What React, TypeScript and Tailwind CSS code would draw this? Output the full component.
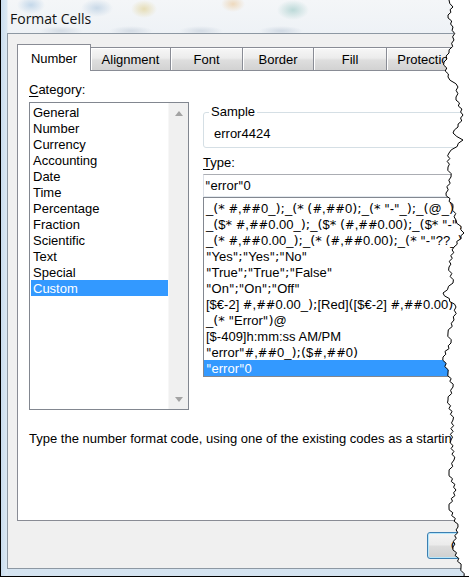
import React from "react";

const tearPts: [number, number][] = [
  [448, 0], [452, 7], [447, 15], [452, 27], [453, 40], [448, 53], [443, 62], [447, 77],
  [457, 87], [455, 97], [462, 115], [457, 127], [452, 133], [462, 140], [448, 153],
  [447, 167], [450, 177], [445, 193], [452, 207], [455, 220], [463, 233], [453, 247],
  [448, 267], [452, 283], [442, 293], [455, 307], [453, 320], [447, 333], [450, 343],
  [442, 357], [447, 373], [452, 387], [447, 400], [452, 420], [450, 440], [453, 460],
  [448, 473], [455, 490], [448, 507], [457, 527], [452, 547], [460, 567], [463, 577],
];

function jag(pts: [number, number][]): [number, number][] {
  const out: [number, number][] = [];
  for (let i = 0; i < pts.length - 1; i++) {
    const [x1, y1] = pts[i];
    const [x2, y2] = pts[i + 1];
    out.push([x1, y1]);
    const steps = Math.max(1, Math.round((y2 - y1) / 3));
    for (let s = 1; s < steps; s++) {
      const t = s / steps;
      const dx = (s % 2 === 0 ? 1 : -1) * 1.2;
      out.push([x1 + (x2 - x1) * t + dx, y1 + (y2 - y1) * t]);
    }
  }
  out.push(pts[pts.length - 1]);
  return out;
}

const categories = [
  "General", "Number", "Currency", "Accounting", "Date", "Time", "Percentage",
  "Fraction", "Scientific", "Text", "Special", "Custom",
];

const types = [
  '_(* #,##0_);_(* (#,##0);_(* "-"_);_(@_)',
  '_($* #,##0.00_);_($* (#,##0.00);_($* "-"??_);_(@_)',
  '_(* #,##0.00_);_(* (#,##0.00);_(* "-"??_);_(@_)',
  '"Yes";"Yes";"No"',
  '"True";"True";"False"',
  '"On";"On";"Off"',
  "[$€-2] #,##0.00_);[Red]([$€-2] #,##0.00)",
  '_(* "Error")@',
  "[$-409]h:mm:ss AM/PM",
  '"error"#,##0_);($#,##0)',
  '"error"0',
];

// Use wider punctuation glyphs to approximate the original dialog font's metrics
function Fmt({ s }: { s: string }) {
  const parts: React.ReactNode[] = [];
  let buf = "";
  const flush = (k: number) => {
    if (buf) {
      parts.push(<span key={"p" + k}>{buf}</span>);
      buf = "";
    }
  };
  s.split("").forEach((ch, i) => {
    let cls = "";
    if (ch === "#") cls = "font-['DejaVu_Sans',sans-serif] text-[11.5px]";
    else if (ch === "*") cls = "font-['DejaVu_Sans',sans-serif] text-[13px]";
    else if (ch === ";") cls = "font-['DejaVu_Sans',sans-serif] text-[13px]";
    else if (ch === "(" || ch === ")") cls = "font-['DejaVu_Sans',sans-serif] text-[13px]";
    else if (ch === '"') cls = "font-['DejaVu_Sans',sans-serif] text-[12px]";
    if (cls) {
      flush(i);
      parts.push(
        <span key={"c" + i} className={cls}>
          {ch}
        </span>
      );
    } else {
      buf += ch;
    }
  });
  flush(s.length + 1);
  return <>{parts}</>;
}

function Tab({ label, w }: { label: string; w: string }) {
  return (
    <div
      className={`${w} h-[23px] border-t border-r border-[#898c95] bg-[linear-gradient(to_bottom,#f7f7f7_0%,#ececec_45%,#dedede_55%,#d2d2d2_100%)] shadow-[inset_1px_1px_0_#ffffff] flex items-center justify-center pt-[2px] whitespace-nowrap overflow-hidden`}
    >
      {label}
    </div>
  );
}

export default function App() {
  const jp = jag(tearPts);
  const line = jp.map(([x, y]) => `${x.toFixed(1)},${y.toFixed(1)}`).join(" ");
  const poly = line + " 469,577 469,0";
  return (
    <div className="relative w-[469px] h-[577px] overflow-hidden border-l border-b border-black font-['Liberation_Sans',Arial,sans-serif] text-[13px] text-black bg-[radial-gradient(14px_9px_at_30px_5px,#c4d8ea,transparent),radial-gradient(16px_9px_at_96px_8px,#c9d9e8,transparent),radial-gradient(13px_9px_at_143px_9px,#e6ddb6,transparent),radial-gradient(12px_8px_at_232px_4px,#eed9bd,transparent),radial-gradient(16px_10px_at_292px_10px,#bcd9d8,transparent),radial-gradient(22px_5px_at_60px_31px,#d3dbe4,transparent),radial-gradient(22px_5px_at_130px_31px,#d3dbe4,transparent),radial-gradient(22px_5px_at_200px_31px,#d3dbe4,transparent),radial-gradient(22px_5px_at_280px_31px,#d0d9e3,transparent),linear-gradient(to_right,#c9ddef_0px,#dbe8f3_6px,transparent_7px),linear-gradient(to_bottom,#f4f6f8_0px,#eef2f6_33px,#d5e4f1_100%)]">
      <div className="h-[33px] pl-[9px] pt-[3px] flex items-center">
        <span className="font-['Open_Sans',sans-serif] text-[14px] text-[#111]">Format Cells</span>
      </div>
      <div className="ml-[6px] w-[560px] h-[536px] border-l border-t border-b border-[#8d98a3] bg-[#f0f0f0] pl-[9px] pt-[10px]">
        <div className="flex items-end h-[26px]">
          <div className="relative z-10 w-[74px] h-[27px] -mb-px bg-white border-l border-t border-r border-[#898c95] flex items-center justify-center pt-[1px]">
            Number
          </div>
          <Tab label="Alignment" w="w-[80px]" />
          <Tab label="Font" w="w-[72px]" />
          <Tab label="Border" w="w-[71px]" />
          <Tab label="Fill" w="w-[73px]" />
          <Tab label="Protection" w="w-[80px]" />
        </div>
        <div className="w-[540px] h-[451px] border-l border-t border-b border-[#898c95] bg-white pl-[11px] pt-[11px]">
          <div className="flex">
            <div className="w-[160px] flex flex-col">
              <div className="h-[16px] leading-[16px]">
                <span className="underline underline-offset-2">C</span>ategory:
              </div>
              <div className="mt-[4px] h-[308px] border border-[#828790] flex">
                <div className="flex-1 pt-[1px] pl-[1px]">
                  {categories.map((c, i) => (
                    <div
                      key={c}
                      className={`h-[16px] leading-[17px] pl-[2px] ${i === categories.length - 1 ? "bg-[#3399ff] text-white" : ""}`}
                    >
                      {c}
                    </div>
                  ))}
                </div>
                <div className="w-[20px] bg-[#f0f0f0] border-l border-[#f7f7f7] flex flex-col justify-between">
                  <div className="h-[20px] flex items-center justify-center">
                    <svg width="8" height="5" viewBox="0 0 8 5">
                      <path d="M0 5 L4 0 L8 5 Z" fill="#a3a3a3" />
                    </svg>
                  </div>
                  <div className="h-[20px] flex items-center justify-center">
                    <svg width="8" height="5" viewBox="0 0 8 5">
                      <path d="M0 0 L8 0 L4 5 Z" fill="#a3a3a3" />
                    </svg>
                  </div>
                </div>
              </div>
            </div>
            <div className="ml-[14px] w-[300px] pt-[22px] flex flex-col">
              <fieldset className="border border-[#d5dfe5] rounded-[3px] p-0 m-0">
                <legend className="ml-[5px] px-[2px] h-[16px] leading-[16px]">Sample</legend>
                <div className="pl-[10px] pt-[6px] pb-[5px] h-[16px] leading-[16px] box-content">error4424</div>
              </fieldset>
              <div className="mt-[7px] h-[16px] leading-[16px]">
                <span className="underline underline-offset-2">T</span>ype:
              </div>
              <div className="mt-[3px] h-[23px] border border-t-[#abadb3] border-x-[#dbdfe6] border-b-[#e3e9ef] pl-[1px] flex items-center whitespace-nowrap">
                <span><Fmt s={'"error"0'} /></span>
              </div>
              <div className="h-[180px] border border-[#828790] pt-[2px] overflow-hidden">
                {types.map((t, i) => (
                  <div
                    key={t}
                    className={`h-[16px] leading-[17px] pl-[2px] whitespace-nowrap ${i === types.length - 1 ? "bg-[#3399ff] text-white" : ""}`}
                  >
                    <Fmt s={t} />
                  </div>
                ))}
              </div>
            </div>
          </div>
          <div className="mt-[20px] h-[16px] leading-[17px] whitespace-nowrap">
            Type the number format code, using one of the existing codes as a starting point.
          </div>
        </div>
        <div className="mt-[11px] ml-[410px] flex gap-[6px]">
          <div className="w-[75px] h-[27px] rounded-[3px] border border-[#3c7fb1] shadow-[inset_0_0_0_1px_#b5e6fb] bg-[linear-gradient(to_bottom,#f4f4f4_0%,#ebebeb_48%,#dddddd_52%,#cfcfcf_100%)] flex items-center justify-center">
            OK
          </div>
          <div className="w-[75px] h-[27px] rounded-[3px] border border-[#707070] bg-[linear-gradient(to_bottom,#f2f2f2_0%,#ebebeb_48%,#dddddd_52%,#cfcfcf_100%)] flex items-center justify-center">
            Cancel
          </div>
        </div>
      </div>
      <svg className="absolute inset-0 pointer-events-none" width="469" height="577" viewBox="0 0 469 577">
        <polygon points={poly} fill="#ffffff" />
        <polyline points={line} fill="none" stroke="#000" strokeWidth="1" />
      </svg>
    </div>
  );
}
